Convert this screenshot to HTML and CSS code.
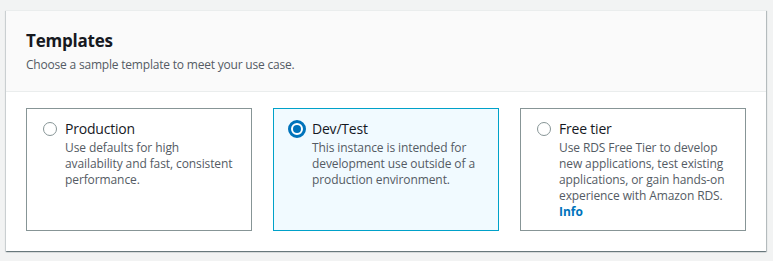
FILE: index.html
```html
<!DOCTYPE html>
<html lang="en">
<head>
    <meta charset="UTF-8">
    <title>Templates</title>
    <link rel="stylesheet" href="styles.css">
</head>
<body>
    <div class="panel">
        <div class="panel-header">
            <h2>Templates</h2>
            <p>Choose a sample template to meet your use case.</p>
        </div>
        <div class="panel-body">
            <label class="tile">
                <span class="radio"></span>
                <span class="tile-text">
                    <span class="tile-title">Production</span>
                    <span class="tile-desc">Use defaults for high availability and fast, consistent performance.</span>
                </span>
            </label>
            <label class="tile selected">
                <span class="radio checked"></span>
                <span class="tile-text">
                    <span class="tile-title">Dev/Test</span>
                    <span class="tile-desc">This instance is intended for development use outside of a production environment.</span>
                </span>
            </label>
            <label class="tile">
                <span class="radio"></span>
                <span class="tile-text">
                    <span class="tile-title">Free tier</span>
                    <span class="tile-desc">Use RDS Free Tier to develop new applications, test existing applications, or gain hands-on experience with Amazon RDS.</span>
                    <a class="info" href="#">Info</a>
                </span>
            </label>
        </div>
    </div>
</body>
</html>
```

FILE: styles.css
```css
body {
    margin: 0;
    padding: 10px 7px 9px 6px;
    background-color: #f2f3f3;
    font-family: 'Open Sans', sans-serif;
    color: #16191f;
}
.panel {
    background: #fff;
    border-top: 1px solid #eaeded;
    box-shadow: 0 1px 1px 0 rgba(0, 28, 36, 0.4), 1px 1px 1px 0 rgba(0, 28, 36, 0.2), -1px 1px 1px 0 rgba(0, 28, 36, 0.1);
}
.panel-header {
    background: #fafafa;
    border-bottom: 1px solid #eaeded;
    padding: 18px 20px 18px;
}
.panel-header h2 {
    margin: 0;
    font-size: 17px;
    line-height: 24px;
    font-weight: 700;
    letter-spacing: -0.2px;
}
.panel-header p {
    margin: 4px 0 0;
    font-size: 12px;
    line-height: 16px;
    color: #545b64;
    letter-spacing: -0.2px;
}
.panel-body {
    display: grid;
    grid-template-columns: repeat(3, 1fr);
    gap: 21px;
    padding: 16px 20px 20px;
}
.tile {
    display: flex;
    align-items: flex-start;
    border: 1px solid #879596;
    padding: 10px 16px 16px 13px;
    height: 123px;
    box-sizing: border-box;
    cursor: pointer;
}
.tile.selected {
    border-color: #00a1c9;
    background: #f1faff;
}
.radio {
    flex: none;
    width: 20px;
    height: 20px;
    margin-right: 5px;
    position: relative;
}
.radio::before {
    content: '';
    position: absolute;
    left: 3px;
    top: 3px;
    width: 12px;
    height: 12px;
    border: 1px solid #879596;
    border-radius: 50%;
    background: #fff;
}
.radio.checked::before {
    left: 1px;
    top: 1px;
    width: 12px;
    height: 12px;
    border: 3px solid #0073bb;
}
.radio.checked::after {
    content: '';
    position: absolute;
    left: 6px;
    top: 6px;
    width: 8px;
    height: 8px;
    border-radius: 50%;
    background: #0073bb;
}
.tile-text {
    display: flex;
    flex-direction: column;
}
.tile-title {
    font-size: 14px;
    line-height: 20px;
    letter-spacing: -0.2px;
}
.tile-desc {
    font-size: 12px;
    line-height: 16px;
    color: #545b64;
    margin-top: 1px;
    letter-spacing: -0.1px;
}
.info {
    font-size: 12px;
    line-height: 16px;
    font-weight: 700;
    color: #0073bb;
    text-decoration: none;
}
```
